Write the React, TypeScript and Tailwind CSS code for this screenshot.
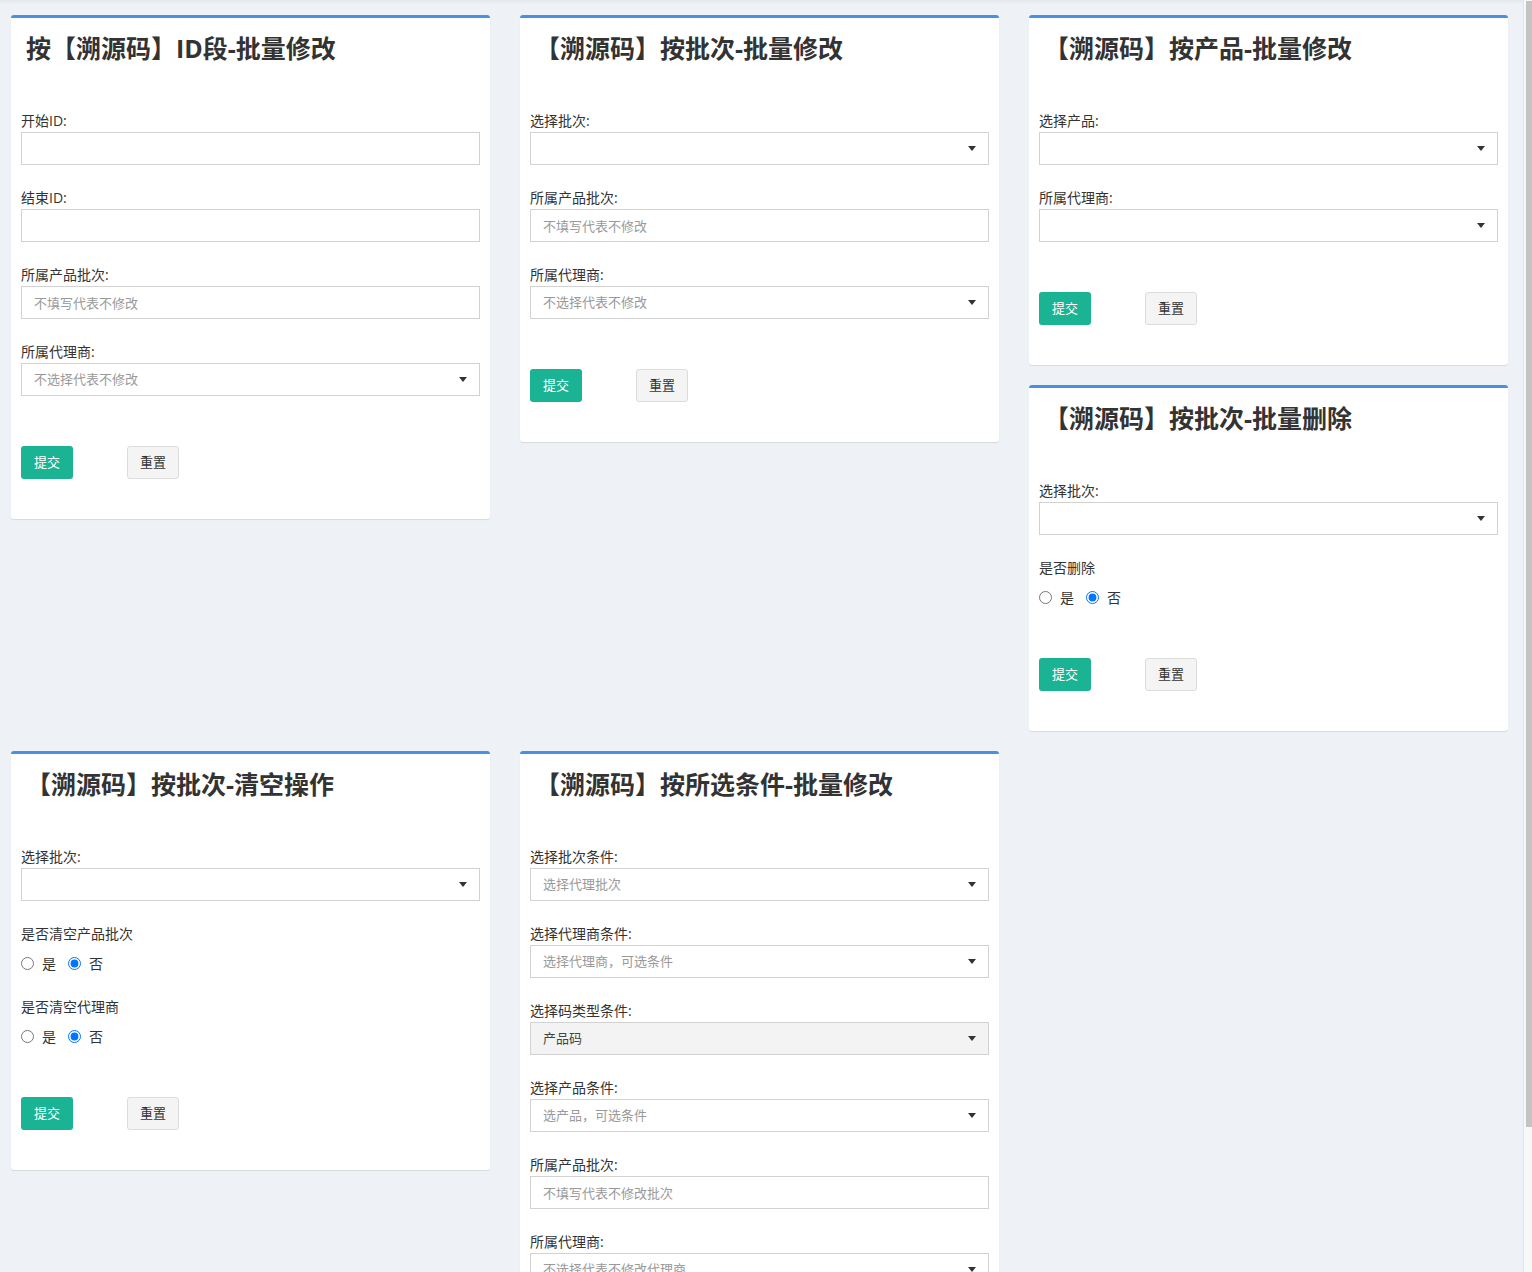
import type { ReactNode } from "react";

const FONT = { fontFamily: '"Open Sans", "Noto Sans CJK SC", sans-serif' };

function Card({ title, children }: { title: string; children: ReactNode }) {
  return (
    <div className="mb-[20px] rounded-[3px] border-t-[3px] border-[#4a90e2] bg-white shadow-[0_1px_1px_rgba(0,0,0,0.1)]">
      <div className="px-[15px] pt-[15px] pb-[48px]">
        <h3 className="text-[25px] font-bold leading-[30px] text-[#333]">{title}</h3>
      </div>
      <div className="px-[10px] pb-[40px]">{children}</div>
    </div>
  );
}

function Label({ children }: { children: ReactNode }) {
  return <label className="mb-[1px] block text-[14px] leading-[20px] text-[#333]">{children}</label>;
}

function TextField({ label, placeholder }: { label: string; placeholder?: string }) {
  return (
    <div className="mb-[23px]">
      <Label>{label}</Label>
      <input
        type="text"
        placeholder={placeholder}
        className="block h-[33px] w-full border border-[#d2d2d2] bg-white px-[12px] text-[13px] text-[#555] outline-none placeholder:text-[#999]"
      />
    </div>
  );
}

function SelectField({
  label,
  placeholder,
  value,
  filled,
}: {
  label: string;
  placeholder?: string;
  value?: string;
  filled?: boolean;
}) {
  return (
    <div className="mb-[23px]">
      <Label>{label}</Label>
      <div
        className={`flex h-[33px] w-full items-center justify-between border border-[#d2d2d2] pl-[12px] pr-[12px] text-[13px] ${
          filled ? "bg-[#f3f3f3]" : "bg-white"
        }`}
      >
        <span className={value ? "text-[#444]" : "text-[#999]"}>{value ?? placeholder ?? ""}</span>
        <span className="h-0 w-0 border-x-[4px] border-t-[5px] border-x-transparent border-t-[#333]" />
      </div>
    </div>
  );
}

function RadioField({ label, name }: { label: string; name: string }) {
  return (
    <div className="mb-[23px]">
      <div className="mb-[8px] text-[14px] leading-[20px] text-[#333]">{label}</div>
      <div className="flex h-[22px] items-center text-[14px] text-[#333]">
        <label className="mr-[12px] inline-flex items-center gap-[8px]">
          <input type="radio" name={name} className="m-0 h-[13px] w-[13px]" />
          是
        </label>
        <label className="inline-flex items-center gap-[8px]">
          <input type="radio" name={name} defaultChecked className="m-0 h-[13px] w-[13px]" />
          否
        </label>
      </div>
    </div>
  );
}

function Buttons() {
  return (
    <div className="flex pt-[27px] text-[13px]">
      <button className="h-[33px] w-[52px] rounded-[3px] bg-[#1ab394] text-white">提交</button>
      <button className="ml-[54px] h-[33px] w-[52px] rounded-[3px] border border-[#dcdcdc] bg-[#f4f4f4] text-[#333]">
        重置
      </button>
    </div>
  );
}

export default function App() {
  return (
    <div style={FONT} className="flex h-[1272px] overflow-hidden bg-[#eef2f6]">
      <main className="min-w-0 flex-1">
        <div className="h-[4px] bg-gradient-to-b from-[#e3e6ea] to-[#eef2f6]" />
        <div className="grid grid-cols-3 items-start gap-x-[30px] pl-[11px] pr-[15px] pt-[11px]">
          <div>
            <Card title="按【溯源码】ID段-批量修改">
              <TextField label="开始ID:" />
              <TextField label="结束ID:" />
              <TextField label="所属产品批次:" placeholder="不填写代表不修改" />
              <SelectField label="所属代理商:" placeholder="不选择代表不修改" />
              <Buttons />
            </Card>
          </div>
          <div>
            <Card title="【溯源码】按批次-批量修改">
              <SelectField label="选择批次:" />
              <TextField label="所属产品批次:" placeholder="不填写代表不修改" />
              <SelectField label="所属代理商:" placeholder="不选择代表不修改" />
              <Buttons />
            </Card>
          </div>
          <div>
            <Card title="【溯源码】按产品-批量修改">
              <SelectField label="选择产品:" />
              <SelectField label="所属代理商:" />
              <Buttons />
            </Card>
            <Card title="【溯源码】按批次-批量删除">
              <SelectField label="选择批次:" />
              <RadioField label="是否删除" name="del" />
              <Buttons />
            </Card>
          </div>
          <div>
            <Card title="【溯源码】按批次-清空操作">
              <SelectField label="选择批次:" />
              <RadioField label="是否清空产品批次" name="clearBatch" />
              <RadioField label="是否清空代理商" name="clearAgent" />
              <Buttons />
            </Card>
          </div>
          <div>
            <Card title="【溯源码】按所选条件-批量修改">
              <SelectField label="选择批次条件:" placeholder="选择代理批次" />
              <SelectField label="选择代理商条件:" placeholder="选择代理商，可选条件" />
              <SelectField label="选择码类型条件:" value="产品码" filled />
              <SelectField label="选择产品条件:" placeholder="选产品，可选条件" />
              <TextField label="所属产品批次:" placeholder="不填写代表不修改批次" />
              <SelectField label="所属代理商:" placeholder="不选择代表不修改代理商" />
              <Buttons />
            </Card>
          </div>
          <div />
        </div>
      </main>
      {/* page scrollbar */}
      <div className="w-[9px] shrink-0 border-l border-[#e2e5e8] bg-[#f8f8f8] pt-[1px]">
        <div className="ml-[2px] h-[1126px] w-[6px] bg-[#c4c4c4]" />
      </div>
    </div>
  );
}
